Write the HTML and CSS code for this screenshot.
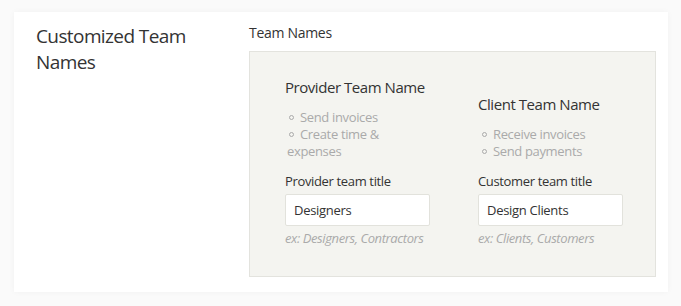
FILE: index.html
```html
<!DOCTYPE html>
<html>
<head>
<meta charset="utf-8">
<link rel="stylesheet" href="styles.css">
</head>
<body>
<div class="card">
  <div class="side">
    <h2 class="side-title">Customized Team Names</h2>
  </div>
  <div class="main">
    <div class="section-label">Team Names</div>
    <div class="panel">
      <div class="col">
        <h3 class="col-title">Provider Team Name</h3>
        <ul class="perks">
          <li>Send invoices</li>
          <li>Create time &amp; expenses</li>
        </ul>
        <label class="field-label">Provider team title</label>
        <div class="input">Designers</div>
        <div class="hint">ex: Designers, Contractors</div>
      </div>
      <div class="col">
        <h3 class="col-title">Client Team Name</h3>
        <ul class="perks">
          <li>Receive invoices</li>
          <li>Send payments</li>
        </ul>
        <label class="field-label">Customer team title</label>
        <div class="input">Design Clients</div>
        <div class="hint">ex: Clients, Customers</div>
      </div>
    </div>
  </div>
</div>
</body>
</html>
```
FILE: styles.css
```css
html, body {
  margin: 0;
  padding: 0;
  background: #fafafa;
  font-family: "Open Sans", "Liberation Sans", sans-serif;
  color: #333;
}
body {
  padding: 12px 13px 14px 14px;
}
.card {
  background: #fff;
  box-shadow: 0 0 6px rgba(0,0,0,0.04);
  display: flex;
  height: 280px;
  box-sizing: border-box;
  padding: 11px 12px 14px 22px;
}
.side {
  width: 213px;
  flex: none;
}
.side-title {
  margin: 0;
  font-size: 19px;
  font-weight: 400;
  line-height: 26px;
  letter-spacing: -0.6px;
  color: #333;
  width: 170px;
}
.main {
  flex: 1;
}
.section-label {
  font-size: 14px;
  line-height: 20px;
  letter-spacing: -0.3px;
  margin-top: 0;
  margin-bottom: 8px;
  color: #333;
}
.panel {
  background: #f4f4f0;
  border: 1px solid #e3e3de;
  width: 407px;
  height: 226px;
  box-sizing: border-box;
  display: flex;
  align-items: flex-end;
  gap: 33px;
  padding: 0 0 29px 35px;
}
.col {
  width: 160px;
  flex: none;
}
.col-title {
  margin: 0 0 11px;
  font-size: 15px;
  font-weight: 400;
  line-height: 22px;
  letter-spacing: -0.45px;
  white-space: nowrap;
  color: #333;
}
.perks {
  list-style: none;
  margin: 0 0 12px;
  padding: 0 0 0 2px;
  width: 125px;
  font-size: 13px;
  line-height: 17px;
  letter-spacing: -0.35px;
  color: #aaa;
}
.perks li::before {
  content: "";
  display: inline-block;
  width: 3px;
  height: 3px;
  border: 1px solid #aaa;
  border-radius: 50%;
  margin: 0 6px 2px 2px;
  vertical-align: middle;
}
.field-label {
  display: block;
  font-size: 13px;
  line-height: 18px;
  letter-spacing: -0.35px;
  margin-bottom: 4px;
  color: #333;
}
.input {
  background: #fff;
  border: 1px solid #e2e2dc;
  border-radius: 2px;
  width: 145px;
  height: 32px;
  box-sizing: border-box;
  padding: 0 8px;
  font-size: 13px;
  line-height: 30px;
  letter-spacing: -0.3px;
  color: #333;
}
.hint {
  margin-top: 3px;
  font-size: 13px;
  line-height: 18px;
  letter-spacing: -0.4px;
  font-style: italic;
  white-space: nowrap;
  color: #aaa;
}
```
